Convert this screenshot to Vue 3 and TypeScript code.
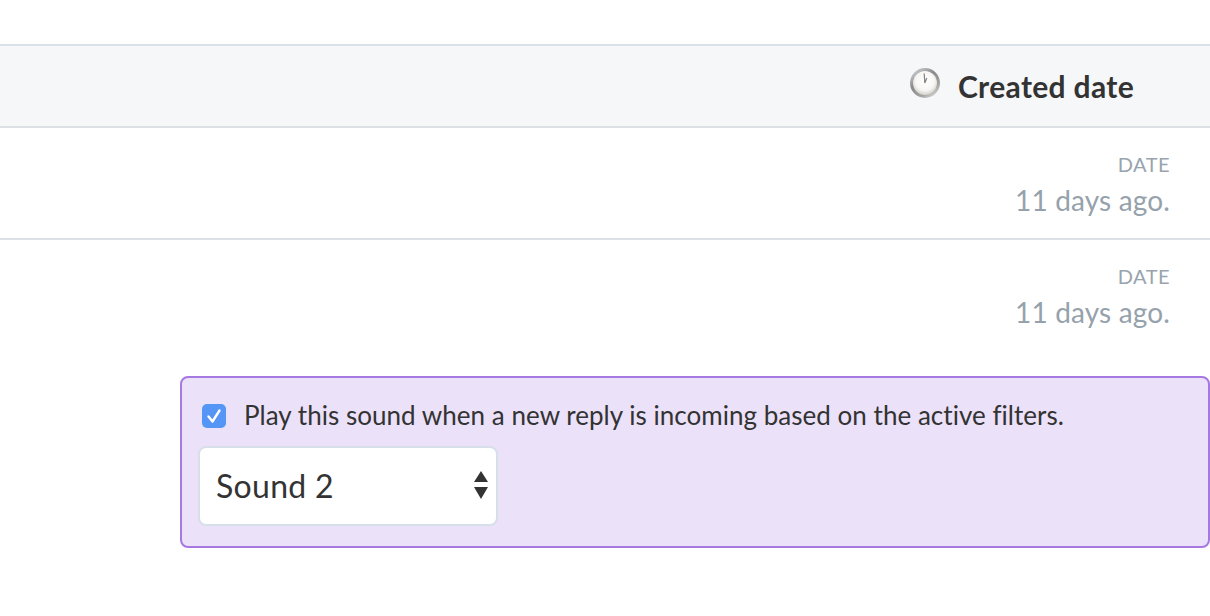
<script setup lang="ts">
interface Row { label: string; value: string }
const rows: Row[] = [
  { label: 'DATE', value: '11 days ago.' },
  { label: 'DATE', value: '11 days ago.' },
]
</script>

<template>
  <div class="page">
    <div class="header">
      <svg class="clock" width="32" height="32" viewBox="0 0 32 32">
        <defs>
          <linearGradient id="rim" x1="0.15" y1="0" x2="0.85" y2="1">
            <stop offset="0" stop-color="#d2d5d8" />
            <stop offset="0.4" stop-color="#86888b" />
            <stop offset="0.75" stop-color="#a5a5a3" />
            <stop offset="1" stop-color="#e2e1de" />
          </linearGradient>
          <radialGradient id="face" cx="0.5" cy="0.42" r="0.6">
            <stop offset="0" stop-color="#ffffff" />
            <stop offset="0.65" stop-color="#f7f6f4" />
            <stop offset="1" stop-color="#d2cdc6" />
          </radialGradient>
        </defs>
        <circle cx="16" cy="16" r="15" fill="url(#rim)" />
        <circle cx="16" cy="16" r="12" fill="url(#face)" />
        <path d="M15.2 6.5 L15.8 16 L17.8 11" stroke="#808183" stroke-width="1.2" fill="none" />
      </svg>
      <span class="title">Created date</span>
    </div>
    <div v-for="(row, i) in rows" :key="i" class="row" :class="{ last: i === rows.length - 1 }">
      <div class="label">{{ row.label }}</div>
      <div class="value">{{ row.value }}</div>
    </div>
    <div class="panel">
      <div class="check-line">
        <span class="check">
          <svg width="24" height="24" viewBox="0 0 24 24">
            <path d="M6.5 12.5 L10.5 17.5 L17.5 6.5" stroke="#fff" stroke-width="2.4" fill="none" stroke-linecap="round" stroke-linejoin="round" />
          </svg>
        </span>
        <span class="check-text">Play this sound when a new reply is incoming based on the active filters.</span>
      </div>
      <div class="select">
        <span>Sound 2</span>
        <svg class="arrows" width="16" height="30" viewBox="0 0 16 30">
          <path d="M8 0 L15 11 L1 11 Z M1 16 L15 16 L8 28 Z" fill="#333" />
        </svg>
      </div>
    </div>
  </div>
</template>

<style>
html, body { margin: 0; background: #fff; }
</style>

<style scoped>
.page {
  width: 1210px;
  height: 616px;
  overflow: hidden;
  background: #fff;
  padding-top: 44px;
  box-sizing: border-box;
  font-family: Lato, "Liberation Sans", sans-serif;
  color: #333;
}
.header {
  height: 84px;
  box-sizing: border-box;
  background: #f6f7f9;
  border-top: 2px solid #dae1e8;
  border-bottom: 2px solid #dde1e6;
  display: flex;
  align-items: center;
  justify-content: flex-end;
  padding-right: 76px;
}
.clock { margin-right: 17px; margin-top: -6px; }
.title {
  font-size: 30px;
  font-weight: 700;
  line-height: 36px;
  margin-top: -1px;
  color: #333;
  letter-spacing: 0.33px;
}
.row {
  height: 112px;
  box-sizing: border-box;
  border-bottom: 2px solid #dde1e6;
  text-align: right;
  padding: 22px 40px 0 0;
}
.row.last { border-bottom: none; height: 136px; }
.label {
  font-size: 20px;
  line-height: 28px;
  color: #98a4ae;
  letter-spacing: 0.5px;
}
.value {
  font-size: 28px;
  line-height: 44px;
  color: #95a2ac;
  letter-spacing: 0.15px;
}
.panel {
  margin-left: 180px;
  width: 1030px;
  height: 172px;
  box-sizing: border-box;
  background: #ebe1f9;
  border: 2px solid #a678e2;
  border-radius: 8px;
  padding: 24px 0 0 16px;
}
.check-line { display: flex; align-items: center; height: 28px; padding-left: 4px; }
.check {
  width: 24px;
  height: 24px;
  border-radius: 5px;
  background: #5595f5;
  flex: none;
  display: block;
}
.check svg { display: block; }
.check-text {
  margin-left: 18px;
  font-size: 26px;
  line-height: 26px;
  margin-top: -3px;
  color: #333;
  letter-spacing: 0.03px;
  white-space: nowrap;
}
.select {
  margin-top: 16px;
  width: 300px;
  height: 80px;
  box-sizing: border-box;
  background: #fff;
  border: 2px solid #d6dfea;
  border-radius: 8px;
  display: flex;
  align-items: center;
  justify-content: space-between;
  padding: 0 7px 0 16px;
  font-size: 32px;
  letter-spacing: 0.3px;
  color: #333;
}
.select > span { margin-top: -2px; }
.arrows { display: block; }
</style>
